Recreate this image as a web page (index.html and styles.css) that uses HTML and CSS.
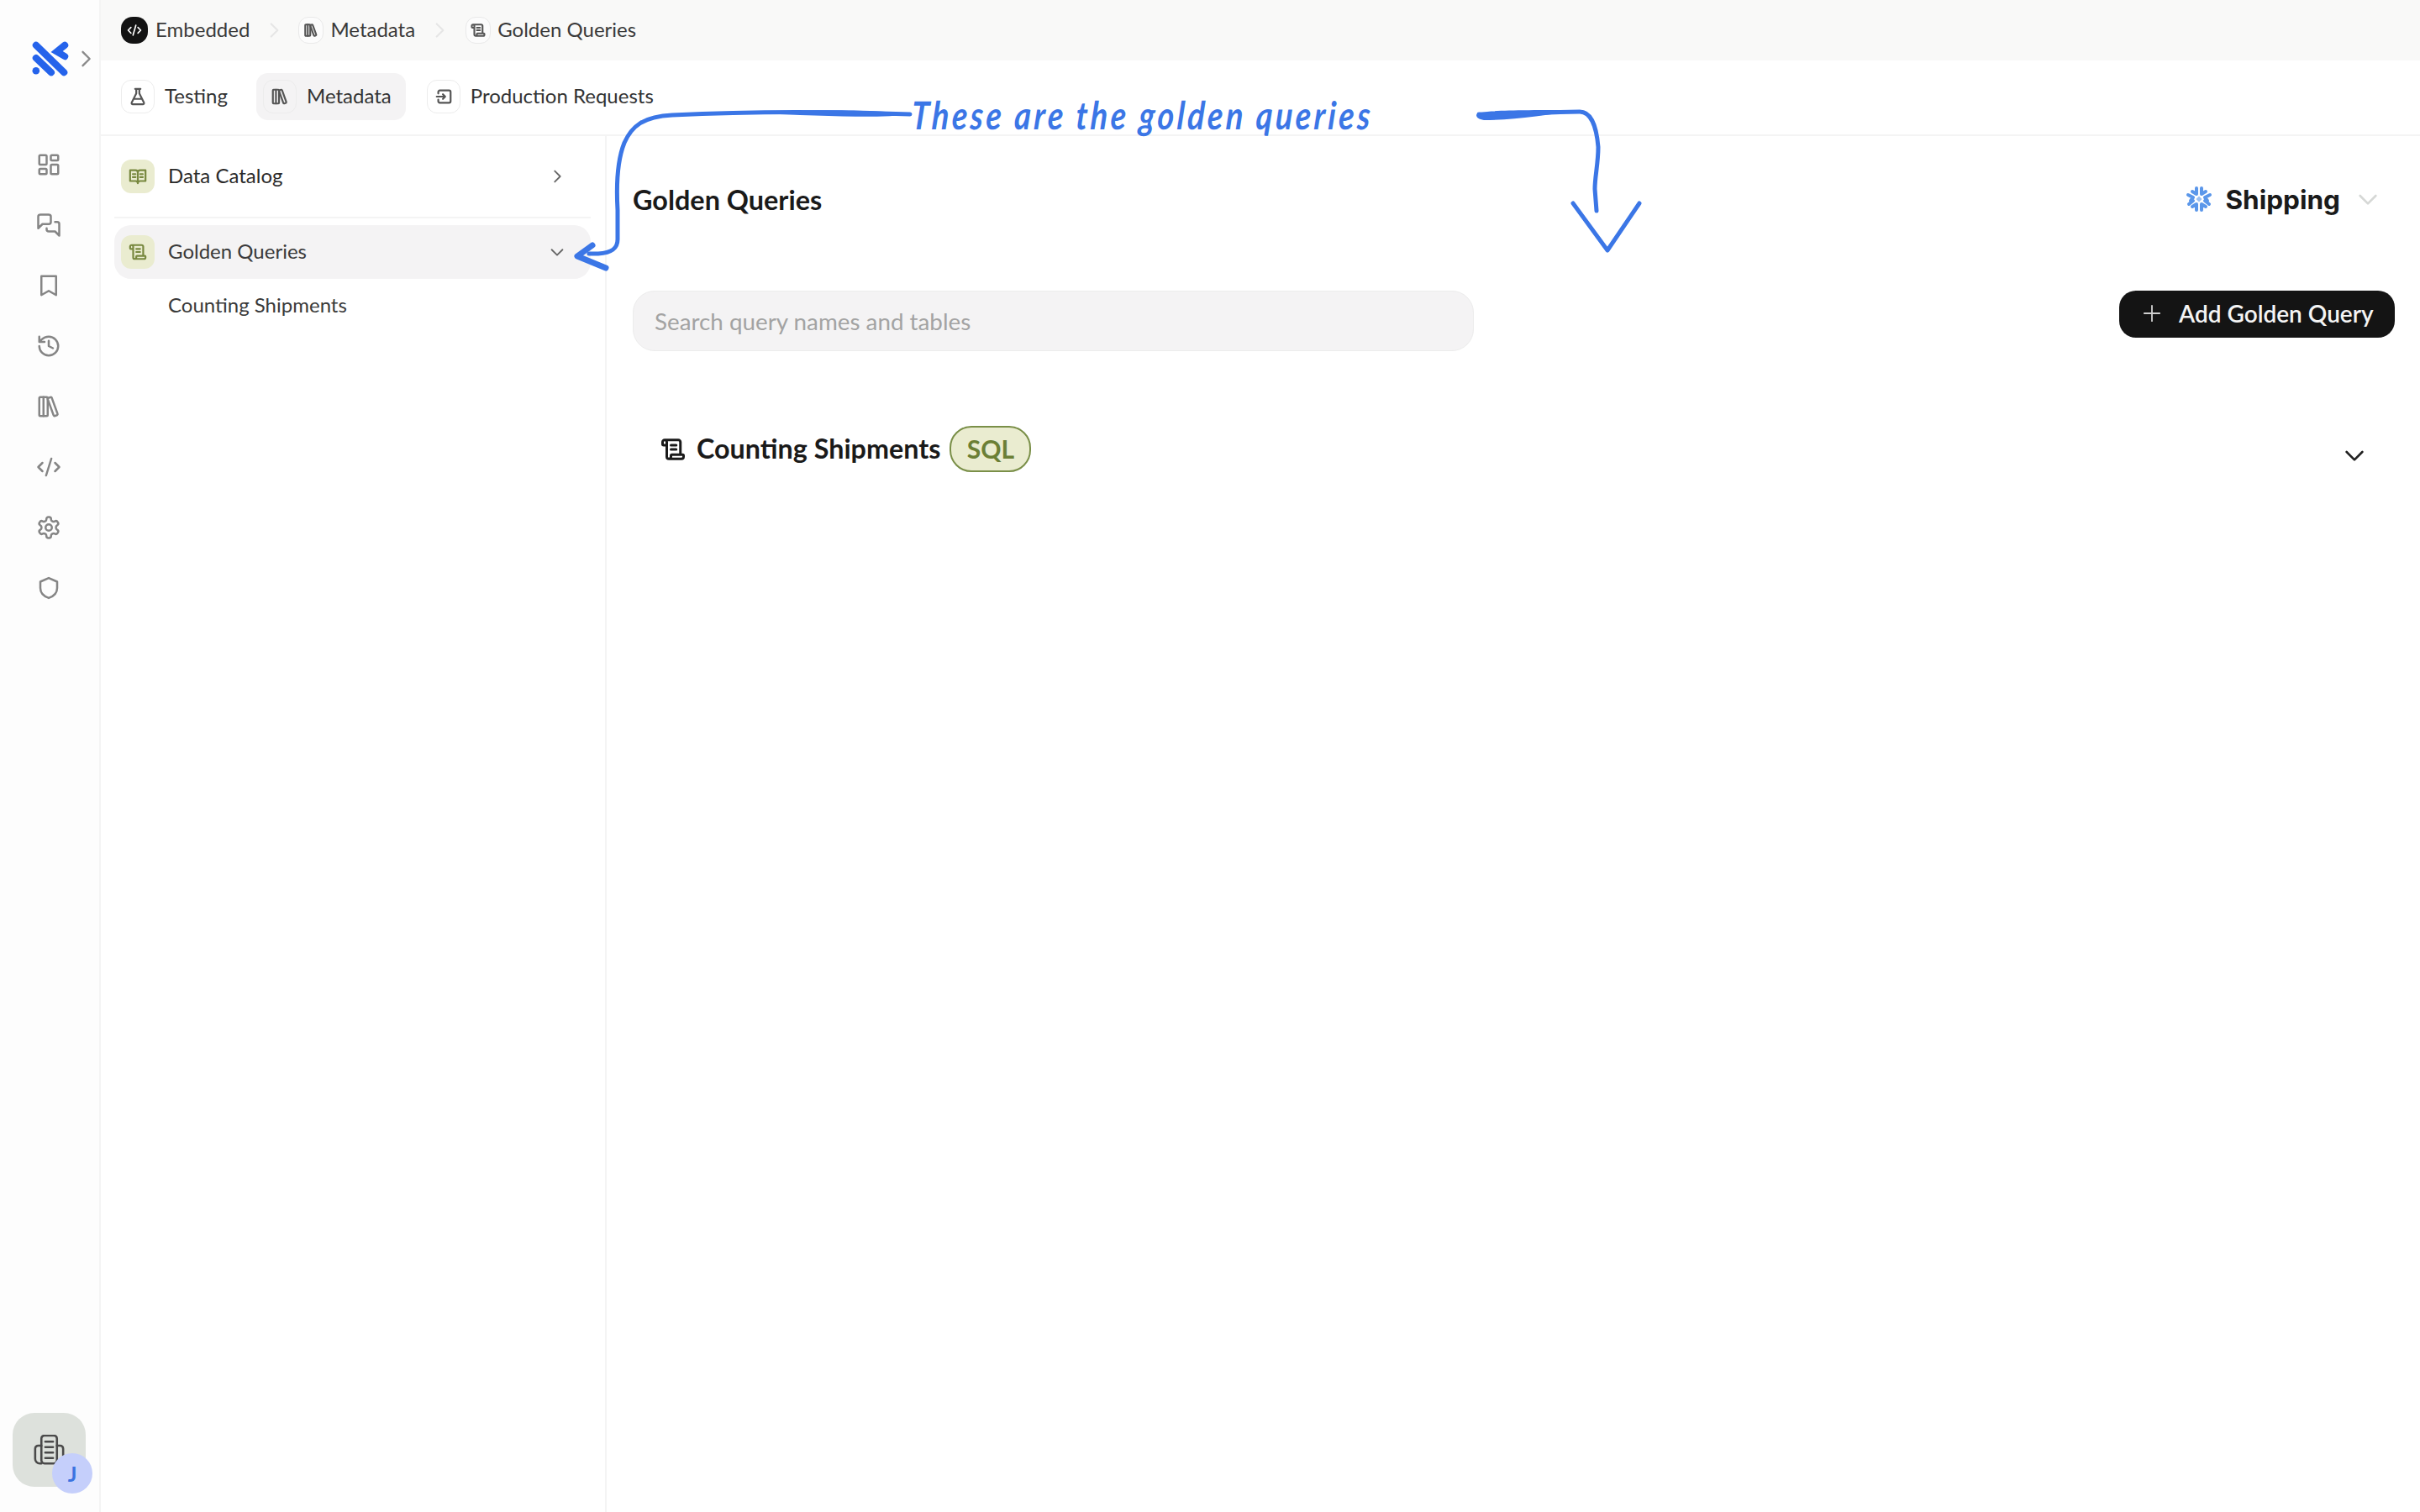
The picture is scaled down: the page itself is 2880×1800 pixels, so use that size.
FILE: index.html
```html
<!DOCTYPE html>
<html lang="en">
<head>
<meta charset="utf-8">
<title>Golden Queries</title>
<link rel="stylesheet" href="styles.css">
</head>
<body>
<svg width="0" height="0" class="defs">
  <symbol id="i-scroll" viewBox="0 0 24 24"><path d="M15 12h-5M15 8h-5M19 17V5a2 2 0 0 0-2-2H4M8 21h12a2 2 0 0 0 2-2v-1a1 1 0 0 0-1-1H11a1 1 0 0 0-1 1v1a2 2 0 1 1-4 0V5a2 2 0 1 0-4 0v2a1 1 0 0 0 1 1h3"/></symbol>
  <symbol id="i-library" viewBox="0 0 24 24"><rect x="3" y="3" width="8" height="18" rx="1"/><path d="M7 3v18M20.4 18.9c.2.5-.1 1.1-.6 1.3l-1.900.7c-.5.2-1.100-.1-1.300-.6L11.100 5.100c-.2-.5.1-1.100.6-1.300l1.900-.7c.5-.2 1.100.1 1.300.6Z"/></symbol>
  <symbol id="i-chev-r" viewBox="0 0 24 24"><path d="m9 5 7 7-7 7"/></symbol>
  <symbol id="i-chev-d" viewBox="0 0 24 24"><path d="m5 9 7 7 7-7"/></symbol>
</svg>
<div class="app">
  <aside class="rail">
    <div class="rail-logo">
      <svg class="logo" viewBox="0 0 46 44"><g fill="none" stroke="#2563eb" stroke-width="8.500" stroke-linecap="round"><path d="M5 5l35 34M5 21l19 18M41 5 31 13l10 6"/></g><circle cx="5" cy="37" r="4.500" fill="#2563eb"/></svg>
      <svg class="ic rail-more"><use href="#i-chev-r"/></svg>
    </div>
    <nav class="rail-nav">
      <svg class="ic rail-ic" viewBox="0 0 24 24"><rect x="3" y="3" width="7" height="9" rx="1"/><rect x="14" y="3" width="7" height="5" rx="1"/><rect x="14" y="12" width="7" height="9" rx="1"/><rect x="3" y="16" width="7" height="5" rx="1"/></svg>
      <svg class="ic rail-ic" viewBox="0 0 24 24"><path d="M14 9a2 2 0 0 1-2 2H6l-4 4V4a2 2 0 0 1 2-2h8a2 2 0 0 1 2 2zM18 9h2a2 2 0 0 1 2 2v11l-4-4h-6a2 2 0 0 1-2-2v-1"/></svg>
      <svg class="ic rail-ic" viewBox="0 0 24 24"><path d="M5 3h14v18l-7-4-7 4z"/></svg>
      <svg class="ic rail-ic" viewBox="0 0 24 24"><path d="M3 12a9 9 0 1 0 9-9 9.750 9.750 0 0 0-6.740 2.740L3 8M3 3v5h5M12 7v5l4 2"/></svg>
      <svg class="ic rail-ic"><use href="#i-library"/></svg>
      <svg class="ic rail-ic" viewBox="0 0 24 24"><path d="m18 16 4-4-4-4M6 8l-4 4 4 4M14.500 4l-5 16"/></svg>
      <svg class="ic rail-ic" viewBox="0 0 24 24"><path d="M12.220 2h-.44a2 2 0 0 0-2 2v.18a2 2 0 0 1-1 1.730l-.43.25a2 2 0 0 1-2 0l-.15-.08a2 2 0 0 0-2.730.73l-.22.38a2 2 0 0 0 .73 2.730l.15.1a2 2 0 0 1 1 1.720v.51a2 2 0 0 1-1 1.740l-.15.09a2 2 0 0 0-.73 2.730l.22.38a2 2 0 0 0 2.730.73l.15-.08a2 2 0 0 1 2 0l.43.25a2 2 0 0 1 1 1.730V20a2 2 0 0 0 2 2h.44a2 2 0 0 0 2-2v-.18a2 2 0 0 1 1-1.730l.43-.25a2 2 0 0 1 2 0l.15.08a2 2 0 0 0 2.730-.73l.22-.39a2 2 0 0 0-.73-2.730l-.15-.08a2 2 0 0 1-1-1.740v-.5a2 2 0 0 1 1-1.740l.15-.09a2 2 0 0 0 .73-2.730l-.22-.38a2 2 0 0 0-2.730-.73l-.15.08a2 2 0 0 1-2 0l-.43-.25a2 2 0 0 1-1-1.730V4a2 2 0 0 0-2-2z"/><circle cx="12" cy="12" r="3"/></svg>
      <svg class="ic rail-ic" viewBox="0 0 24 24"><path d="M12 2.500 20 6v6c0 5-3.500 8-8 9.500C7.500 20 4 17 4 12V6z"/></svg>
    </nav>
    <div class="tile">
      <svg class="ic tile-ic" viewBox="0 0 40 40"><rect x="10" y="1" width="20" height="36" rx="4"/><path d="M15 9h10M15 16h10M15 23h10M15 30h10M10 14H6a4 4 0 0 0-4 4v13a6 6 0 0 0 6 6h2M30 14h4a4 4 0 0 1 4 4v13"/></svg>
      <span class="avatar">J</span>
    </div>
  </aside>

  <div class="main">
    <header class="crumbs">
      <span class="crumb"><span class="crumb-code"><svg class="ic" viewBox="0 0 24 24"><path d="m17 16 4-4-4-4M7 8l-4 4 4 4M14 5l-4 14"/></svg></span><span class="tx">Embedded</span></span>
      <svg class="ic crumb-sep"><use href="#i-chev-r"/></svg>
      <span class="crumb"><span class="crumb-chip"><svg class="ic"><use href="#i-library"/></svg></span><span class="tx">Metadata</span></span>
      <svg class="ic crumb-sep"><use href="#i-chev-r"/></svg>
      <span class="crumb"><span class="crumb-chip"><svg class="ic"><use href="#i-scroll"/></svg></span><span class="tx">Golden Queries</span></span>
    </header>

    <div class="tabs">
      <span class="tab"><span class="tab-chip"><svg class="ic" viewBox="0 0 24 24"><path d="M14 2v6l6 12a1.500 1.500 0 0 1-1.500 2h-13A1.500 1.500 0 0 1 4 20l6-12V2M7 15h10M8.500 2h7"/></svg></span><span class="tx">Testing</span></span>
      <span class="tab tab-on"><span class="tab-chip"><svg class="ic"><use href="#i-library"/></svg></span><span class="tx">Metadata</span></span>
      <span class="tab"><span class="tab-chip"><svg class="ic" viewBox="0 0 24 24"><path d="M5 8V6a2 2 0 0 1 2-2h12a2 2 0 0 1 2 2v12a2 2 0 0 1-2 2H7a2 2 0 0 1-2-2v-2M3 12h11M11 9l3 3-3 3"/></svg></span><span class="tx">Production Requests</span></span>
    </div>

    <div class="body">
      <aside class="side">
        <div class="side-row">
          <span class="side-chip"><svg class="ic" viewBox="0 0 24 24"><path d="M2 4h7a3 3 0 0 1 3 3 3 3 0 0 1 3-3h7v14h-7a3 3 0 0 0-3 3 3 3 0 0 0-3-3H2zM12 7v14M5.500 9H9M5.500 13H9M15 9h3.500M15 13h3.500"/></svg></span>
          <span class="tx">Data Catalog</span>
          <svg class="ic side-chev"><use href="#i-chev-r"/></svg>
        </div>
        <div class="side-rule"></div>
        <div class="side-row side-row-on">
          <span class="side-chip"><svg class="ic"><use href="#i-scroll"/></svg></span>
          <span class="tx">Golden Queries</span>
          <svg class="ic side-chev"><use href="#i-chev-d"/></svg>
        </div>
        <div class="side-sub"><span class="tx">Counting Shipments</span></div>
      </aside>

      <main class="content">
        <div class="head">
          <h1 class="title">Golden Queries</h1>
          <div class="conn">
            <svg class="flake" viewBox="0 0 32 32"><g fill="none" stroke="#5b97ea" stroke-width="4" stroke-linecap="round" stroke-linejoin="round"><path d="M13 3v7l-5-3M19 3v7l5-3M13 29v-7l-5 3M19 29v-7l5 3M3 11l6 3-3 4M29 11l-6 3 3 4M4 22l5-4M28 22l-5-4"/></g><path d="M16 12.500 19.500 16 16 19.500 12.500 16z" fill="#9cc0f2"/></svg>
            <span class="conn-name">Shipping</span>
            <svg class="ic conn-chev"><use href="#i-chev-d"/></svg>
          </div>
        </div>
        <div class="toolbar">
          <div class="search">Search query names and tables</div>
          <button class="add" type="button"><svg class="ic add-plus" viewBox="0 0 24 24"><path d="M12 2v20M2 12h20"/></svg>Add Golden Query</button>
        </div>
        <div class="query">
          <svg class="ic query-ic"><use href="#i-scroll"/></svg>
          <span class="query-name">Counting Shipments</span>
          <span class="badge">SQL</span>
          <svg class="ic query-chev"><use href="#i-chev-d"/></svg>
        </div>
      </main>
    </div>
  </div>
</div>

<svg class="ink" viewBox="0 0 2880 1800" width="2880" height="1800">
  <path class="ink-fill" d="M1084 136C1040 130 960 130 880 134C960 137 1040 142 1084 136Z"/>
  <path class="ink-fill" d="M1757 137C1757 131 1800 131 1882 131C1840 137 1800 143 1766 143C1760 142 1757 140 1757 137Z"/>
  <g fill="none" stroke="#3b76e6" stroke-linecap="round" stroke-linejoin="round">
    <path stroke-width="5" d="M1083 136C1000 133 900 132 800 137C765 139 752 150 743 170C735 190 733 215 735 250L735 285C735 296 728 301 712 302L701 302"/>
    <path stroke-width="7" d="M705 292L687 305L721 319"/>
    <path stroke-width="5" d="M1760 136C1800 137 1850 133 1880 133C1893 133 1900 150 1902 175C1902 195 1898 210 1898 225L1900 251"/>
    <path stroke-width="5" d="M1872 242L1913 298L1951 242"/>
  </g>
</svg>
<div class="note">These are the golden queries</div>
</body>
</html>
```

FILE: styles.css
```css
* { box-sizing: border-box; }
html, body { margin: 0; padding: 0; }
body {
  width: 2880px;
  height: 1800px;
  overflow: hidden;
  background: #fff;
  color: #1c1c1c;
  font-family: Lato, "Liberation Sans", sans-serif;
  font-size: 24px;
  position: relative;
}
.defs { position: absolute; }
.ic {
  width: 24px;
  height: 24px;
  fill: none;
  stroke: currentColor;
  stroke-width: 2;
  stroke-linecap: round;
  stroke-linejoin: round;
  flex: none;
}
.tx { padding-bottom: 4px; }
.app { display: flex; height: 1800px; }

/* left rail */
.rail {
  width: 120px;
  flex: none;
  display: flex;
  flex-direction: column;
  background: #fdfdfd;
  border-right: 2px solid #f4f4f4;
  padding: 49px 0 30px;
}
.rail-logo { display: flex; align-items: center; height: 42px; padding-left: 38px; }
.logo { width: 44px; height: 42px; flex: none; }
.rail-more { width: 28px; height: 28px; margin-left: 6px; color: #8a8a8a; }
.rail-nav {
  display: flex;
  flex-direction: column;
  align-items: center;
  gap: 42px;
  width: 116px;
  margin-top: 90px;
  color: #858585;
}
.rail-ic { width: 30px; height: 30px; stroke-width: 2; }
.tile {
  position: relative;
  margin: auto 0 0 15px;
  width: 87px;
  height: 88px;
  border-radius: 26px;
  background: #dde1dc;
  display: flex;
  align-items: center;
  justify-content: center;
}
.tile-ic { width: 37px; height: 37px; color: #4a4a4a; stroke-width: 2.800; }
.avatar {
  position: absolute;
  left: 47px;
  top: 48px;
  width: 48px;
  height: 48px;
  border-radius: 50%;
  background: #c5cffb;
  color: #3b73e0;
  font-weight: 700;
  font-size: 25px;
  display: flex;
  align-items: center;
  justify-content: center;
}

/* main */
.main { flex: 1; display: flex; flex-direction: column; min-width: 0; }
.crumbs {
  height: 72px;
  flex: none;
  background: #f9f9f8;
  display: flex;
  align-items: center;
  gap: 16px;
  padding-left: 24px;
  color: #3a3a3a;
}
.crumb { display: flex; align-items: center; gap: 9px; }
.crumb:last-child { margin-left: 2px; }
.crumb-code {
  width: 32px;
  height: 32px;
  border-radius: 14px;
  background: #131313;
  color: #fff;
  display: flex;
  align-items: center;
  justify-content: center;
}
.crumb-code .ic { width: 20px; height: 20px; }
.crumb-chip {
  width: 30px;
  height: 32px;
  margin-right: -1px;
  border-radius: 12px;
  border: 1.500px solid #e9e9e9;
  background: #fcfcfc;
  display: flex;
  align-items: center;
  justify-content: center;
  color: #555;
}
.crumb-chip .ic { width: 18px; height: 18px; stroke-width: 2.800; }
.crumb-sep { width: 26px; height: 26px; color: #e6e6e6; }

.tabs {
  height: 90px;
  flex: none;
  display: flex;
  align-items: center;
  gap: 17px;
  padding: 0 16px 2px;
  border-bottom: 2px solid #f4f4f4;
  color: #333;
}
.tab {
  display: flex;
  align-items: center;
  gap: 12px;
  height: 56px;
  padding: 0 17px 0 8px;
  border-radius: 14px;
}
.tab-on { background: #f4f3f4; }
.tab-chip {
  width: 40px;
  height: 40px;
  border-radius: 12px;
  border: 1.500px solid #ececec;
  background: #fff;
  display: flex;
  align-items: center;
  justify-content: center;
  color: #555;
}
.tab-on .tab-chip { background: #f4f3f4; }
.tab-chip .ic { width: 22px; height: 22px; stroke-width: 2.400; }

.body { flex: 1; display: flex; min-height: 0; }
.side {
  width: 602px;
  flex: none;
  border-right: 2px solid #f4f4f4;
  padding: 16px 17px 0 16px;
  color: #2b2b2b;
}
.side-row {
  height: 64px;
  display: flex;
  align-items: center;
  gap: 16px;
  padding: 0 29px 0 8px;
  border-radius: 20px;
}
.side-row-on { background: #f4f3f4; color: #3a3a3a; }
.side-chip {
  width: 40px;
  height: 40px;
  border-radius: 12px;
  background: #eaecd0;
  color: #78883f;
  display: flex;
  align-items: center;
  justify-content: center;
}
.side-chip .ic { width: 22px; height: 22px; stroke-width: 2.400; }
.side-chev { width: 22px; height: 22px; margin-left: auto; color: #666; }
.side-rule { height: 2px; background: #f4f4f4; margin: 16px 0 8px; }
.side-sub { height: 64px; display: flex; align-items: center; padding-left: 64px; color: #3a3a3a; }

.content { flex: 1; min-width: 0; padding: 0 30px 0 31px; }
.head {
  height: 150px;
  margin-bottom: 34px;
  display: flex;
  align-items: center;
  justify-content: space-between;
  padding-right: 16px;
}
.title { margin: 0; font-size: 32.400px; font-weight: 700; color: #1a1a1a; }
.conn { display: flex; align-items: center; }
.flake { width: 32px; height: 32px; flex: none; }
.conn-name { font-family: Inter, sans-serif; font-weight: 700; font-size: 31.500px; margin-left: 15px; color: #1a1a1a; }
.conn-chev { width: 32px; height: 32px; margin-left: 17px; color: #d6d8d6; }
.toolbar { display: flex; align-items: flex-start; justify-content: space-between; }
.search {
  width: 1001px;
  height: 72px;
  padding-left: 25px;
  display: flex;
  align-items: center;
  font-size: 27.800px;
  color: #a3a3a3;
  background: #f4f3f4;
  border: 1.500px solid #ececec;
  border-radius: 26px;
}
.add {
  width: 328px;
  height: 56px;
  padding: 0 0 2px 28px;
  border: 0;
  border-radius: 20px;
  background: #141414;
  color: #f4f4f4;
  font: 600 28px Lato, "Liberation Sans", sans-serif;
  display: flex;
  align-items: center;
  gap: 21px;
}
.add-plus { width: 22px; height: 22px; color: #cfcfcf; }
.query {
  margin-top: 89px;
  height: 55px;
  display: flex;
  align-items: center;
  padding: 0 32px 0 33px;
}
.query-ic { width: 30px; height: 30px; color: #1a1a1a; stroke-width: 2.400; }
.query-name { font-size: 32.300px; font-weight: 700; margin-left: 13px; padding-bottom: 2px; color: #1a1a1a; }
.badge {
  margin-left: 11px;
  width: 97px;
  height: 55px;
  border-radius: 26px;
  border: 2px solid #7a8f48;
  background: #eaecd0;
  color: #6b7f35;
  font-size: 30px;
  font-weight: 700;
  padding-bottom: 2px;
  display: flex;
  align-items: center;
  justify-content: center;
}
.query-chev { width: 32px; height: 32px; margin: 14px 0 0 auto; color: #222; }

/* annotation lying over the page */
.ink { position: absolute; left: 0; top: 0; pointer-events: none; }
.ink-fill { fill: #3b76e6; }
.note {
  position: absolute;
  left: 1085px;
  top: 109px;
  white-space: nowrap;
  font-family: Lato, sans-serif;
  font-style: italic;
  font-weight: 700;
  font-size: 46px;
  letter-spacing: 4.300px;
  color: #3b76e6;
  transform-origin: left center;
  transform: scaleX(.82) skewX(-4deg);
}
```
